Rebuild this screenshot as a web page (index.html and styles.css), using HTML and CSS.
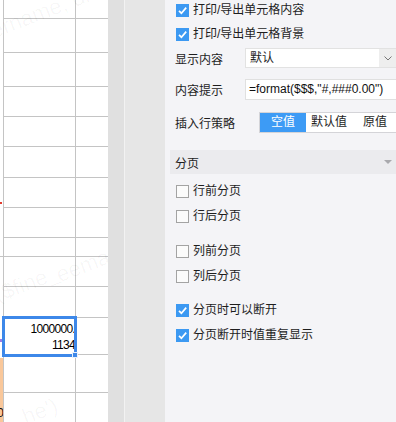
FILE: index.html
```html
<!DOCTYPE html>
<html lang="zh-CN">
<head>
<meta charset="utf-8">
<title>单元格属性</title>
<link rel="stylesheet" href="styles.css">
</head>
<body>
<div class="app">
  <div class="sheet">
    <div class="edge">
      <div class="edge-blank e1"></div>
      <div class="edge-red"></div>
      <div class="edge-blank e2"></div>
      <div class="edge-line"></div>
      <div class="edge-blank e3"></div>
      <div class="edge-purple"></div>
      <div class="edge-blank e4"></div>
      <div class="edge-orange"><span class="edge-digit">0</span></div>
    </div>
    <div class="grid">
      <div class="cell"></div><div class="cell"></div>
      <div class="cell"></div><div class="cell"></div>
      <div class="cell"></div><div class="cell"></div>
      <div class="cell"></div><div class="cell"></div>
      <div class="cell"></div><div class="cell"></div>
      <div class="cell"></div><div class="cell"></div>
      <div class="cell"></div><div class="cell"></div>
      <div class="cell"></div><div class="cell"></div>
      <div class="cell"></div><div class="cell"></div>
      <div class="cell"></div><div class="cell"></div>
      <div class="cell"></div><div class="cell"></div>
      <div class="cell num"><span>1000000.</span><span>1134</span></div><div class="cell"></div>
      <div class="cell"></div><div class="cell"></div>
      <div class="cell"></div><div class="cell"></div>
    </div>
    <span class="wm wm1">ername, dra100</span>
    <span class="wm wm2">eema</span>
    <span class="wm wm3">($fine_</span>
    <span class="wm wm4">he')</span>
    <div class="selection"></div>
    <div class="handle"></div>
  </div>
  <div class="vscroll"></div>
  <div class="sep"></div>
  <div class="gutter"></div>
  <div class="panel">
    <div class="check-row r-top">
      <span class="box checked"><svg viewBox="0 0 13 13" width="13" height="13"><polyline points="3,6.8 5.4,9.2 10.2,3.6" fill="none" stroke="#fff" stroke-width="1.7"/></svg></span>
      <span class="check-text">打印/导出单元格内容</span>
    </div>
    <div class="check-row r-second">
      <span class="box checked"><svg viewBox="0 0 13 13" width="13" height="13"><polyline points="3,6.8 5.4,9.2 10.2,3.6" fill="none" stroke="#fff" stroke-width="1.7"/></svg></span>
      <span class="check-text">打印/导出单元格背景</span>
    </div>
    <div class="field-row r-select">
      <span class="field-label">显示内容</span>
      <div class="select">
        <span class="select-value">默认</span>
        <span class="select-arrow"><svg viewBox="0 0 8 5" width="8" height="5"><polyline points="0.5,0.5 4,4 7.5,0.5" fill="none" stroke="#777" stroke-width="1"/></svg></span>
      </div>
    </div>
    <div class="field-row r-input">
      <span class="field-label">内容提示</span>
      <div class="input">=format($$$,"#,###0.00")</div>
    </div>
    <div class="field-row r-seg">
      <span class="field-label wide">插入行策略</span>
      <div class="segmented">
        <span class="seg active">空值</span>
        <span class="seg">默认值</span>
        <span class="seg">原值</span>
      </div>
    </div>
    <div class="section-head">
      <span>分页</span>
      <span class="caret"></span>
    </div>
    <div class="group g1">
      <div class="check-row"><span class="box"></span><span class="check-text">行前分页</span></div>
      <div class="check-row"><span class="box"></span><span class="check-text">行后分页</span></div>
    </div>
    <div class="group g2">
      <div class="check-row"><span class="box"></span><span class="check-text">列前分页</span></div>
      <div class="check-row"><span class="box"></span><span class="check-text">列后分页</span></div>
    </div>
    <div class="group g3">
      <div class="check-row"><span class="box checked"><svg viewBox="0 0 13 13" width="13" height="13"><polyline points="3,6.8 5.4,9.2 10.2,3.6" fill="none" stroke="#fff" stroke-width="1.7"/></svg></span><span class="check-text">分页时可以断开</span></div>
      <div class="check-row"><span class="box checked"><svg viewBox="0 0 13 13" width="13" height="13"><polyline points="3,6.8 5.4,9.2 10.2,3.6" fill="none" stroke="#fff" stroke-width="1.7"/></svg></span><span class="check-text">分页断开时值重复显示</span></div>
    </div>
  </div>
</div>
</body>
</html>
```

FILE: styles.css
```css
* { box-sizing: border-box; }
html, body { margin: 0; padding: 0; }
body {
  width: 396px;
  height: 422px;
  overflow: hidden;
  font-family: "Liberation Sans", "Noto Sans CJK SC", sans-serif;
  font-size: 12px;
  color: #1e1e1e;
}
.app {
  display: flex;
  width: 396px;
  height: 422px;
}

/* ---------- spreadsheet ---------- */
.sheet {
  position: relative;
  width: 108px;
  height: 422px;
  flex: none;
  display: flex;
  overflow: hidden;
  background: #fff;
}
.edge {
  width: 4px;
  flex: none;
  display: flex;
  flex-direction: column;
  border-right: 1px solid #c4c4c4;
}
.edge-blank { flex: none; }
.e1 { height: 202px; }
.e2 { height: 52px; }
.e3 { height: 82px; }
.e4 { height: 16px; }
.edge-red { height: 2px; width: 2px; background: #e23c2e; }
.edge-line { height: 1px; background: #c4c4c4; }
.edge-purple { height: 3px; width: 2px; background: #9c7ce6; }
.edge-orange {
  flex: 1;
  background: #f9c79a;
  display: flex;
  justify-content: flex-end;
  align-items: flex-start;
  padding-top: 48px;
  overflow: hidden;
}
.edge-digit {
  font-size: 13px;
  line-height: 14px;
  color: #111;
  margin-right: -1px;
}
.grid {
  display: grid;
  grid-template-columns: 71px 32px;
  grid-template-rows: 18px 33px 33px 29px 29px 30px 29px 29px 18px 29px 30px 36px 37px 40px;
  gap: 1px;
  background: #c4c4c4;
  flex: none;
  height: 460px;
  align-content: start;
}
.cell { background: #fff; }
.cell.num {
  display: flex;
  flex-direction: column;
  align-items: flex-end;
  padding-top: 3px;
  font-family: "Liberation Sans", sans-serif;
  font-size: 12px;
  line-height: 16px;
  letter-spacing: -0.7px;
  color: #000;
  margin-right: 0;
  overflow: hidden;
}
.wm {
  position: absolute;
  font-size: 22px;
  color: rgba(0, 0, 0, 0.035);
  white-space: nowrap;
  transform: rotate(-21deg);
  transform-origin: left bottom;
  pointer-events: none;
}
.wm1 { left: -4px; top: 18px; }
.wm2 { left: 62px; top: 262px; }
.wm3 { left: 0px; top: 282px; }
.wm4 { left: 28px; top: 404px; }
.selection {
  position: absolute;
  left: 2px;
  top: 316px;
  width: 75px;
  height: 41px;
  border: 3px solid #3d88e9;
}
.handle {
  position: absolute;
  left: 72px;
  top: 352px;
  width: 6px;
  height: 6px;
  background: #3d88e9;
  border: 1px solid #e8f0fb;
}

/* ---------- middle strips ---------- */
.vscroll { width: 16px; flex: none; background: #e0e0e0; }
.sep { width: 1px; flex: none; background: #f2f2f2; }
.gutter { width: 40px; flex: none; background: #e6e6e6; }

/* ---------- property panel ---------- */
.panel {
  width: 231px;
  flex: none;
  background: #f4f4f7;
  display: flex;
  flex-direction: column;
  overflow: hidden;
}
.check-row {
  display: flex;
  align-items: center;
  height: 24px;
  padding-left: 11px;
  gap: 4px;
  white-space: nowrap;
}
.r-top { height: 20px; }
.r-second { height: 28px; }
.box {
  width: 13px;
  height: 13px;
  flex: none;
  border: 1px solid #a3a3a3;
  background: #fbfbfb;
  display: block;
}
.box.checked {
  border: none;
  background: #3c99f2;
}
.box svg { display: block; }
.check-text { line-height: 16px; }

.field-row {
  display: flex;
  align-items: center;
  height: 21px;
  white-space: nowrap;
}
.r-select { height: 20px; }
.r-input { margin-top: 11px; }
.r-seg { margin-top: 12px; }
.field-label {
  width: 80px;
  flex: none;
  padding-left: 10px;
}
.field-label.wide { width: 94px; }
.select {
  width: 155px;
  height: 20px;
  flex: none;
  display: flex;
  background: #fff;
  border: 1px solid #e2e2e2;
}
.select-value {
  flex: 1;
  padding-left: 4px;
  line-height: 18px;
}
.select-arrow {
  width: 20px;
  flex: none;
  background: #eeeeee;
  display: flex;
  align-items: center;
  justify-content: flex-start;
  padding-left: 5px;
}
.select-arrow svg { display: block; }
.input {
  width: 160px;
  height: 21px;
  flex: none;
  background: #fff;
  border: 1px solid #e0e0e0;
  padding-left: 3px;
  line-height: 19px;
  color: #111;
}
.segmented {
  display: flex;
  flex: none;
  height: 21px;
  border: 1px solid #d4d4d8;
  background: #fff;
}
.seg {
  width: 46px;
  flex: none;
  text-align: center;
  line-height: 19px;
  color: #1e1e1e;
}
.seg.active {
  background: #3d9bf5;
  color: #fff;
}
.section-head {
  margin-top: 17px;
  margin-left: 5px;
  height: 24px;
  background: #ebebee;
  display: flex;
  align-items: center;
  justify-content: space-between;
  padding-left: 5px;
  padding-right: 4px;
}
.caret {
  width: 0;
  height: 0;
  border-left: 4px solid transparent;
  border-right: 4px solid transparent;
  border-top: 4px solid #a9a9ad;
}
.group {
  display: flex;
  flex-direction: column;
  gap: 1px;
}
.g1 { margin-top: 5px; }
.g2 { margin-top: 11px; }
.g3 { margin-top: 10px; }
```
